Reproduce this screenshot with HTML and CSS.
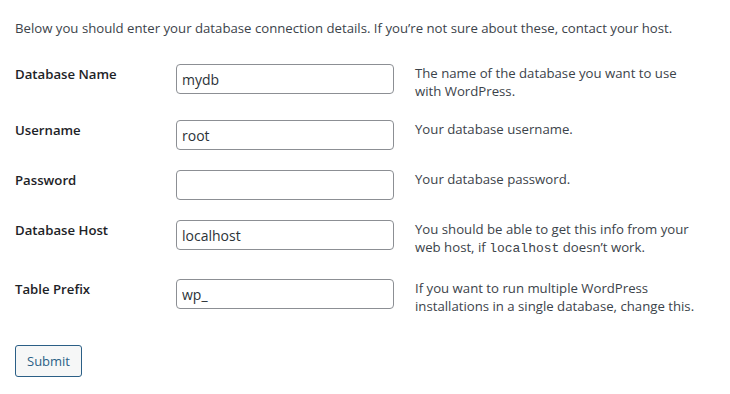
FILE: index.html
```html
<!DOCTYPE html>
<html lang="en">
  <head>
    <meta charset="UTF-8">
    <title>WordPress &rsaquo; Setup Configuration File</title>
    <link rel="stylesheet" href="styles.css">
  </head>
  <body>
    <form class="setup" method="post" action="setup-config.php?step=2">
      <p class="intro">Below you should enter your database connection details. If you&#8217;re not sure about these, contact your host.</p>

      <div class="form-table">
        <div class="row">
          <label for="dbname">Database Name</label>
          <input id="dbname" name="dbname" type="text" value="mydb">
          <p class="desc">The name of the database you want to use with WordPress.</p>
        </div>
        <div class="row">
          <label for="uname">Username</label>
          <input id="uname" name="uname" type="text" value="root">
          <p class="desc">Your database username.</p>
        </div>
        <div class="row">
          <label for="pwd">Password</label>
          <input id="pwd" name="pwd" type="text" value="">
          <p class="desc">Your database password.</p>
        </div>
        <div class="row">
          <label for="dbhost">Database Host</label>
          <input id="dbhost" name="dbhost" type="text" value="localhost">
          <p class="desc">You should be able to get this info from your web host, if <code>localhost</code> doesn&#8217;t work.</p>
        </div>
        <div class="row">
          <label for="prefix">Table Prefix</label>
          <input id="prefix" name="prefix" type="text" value="wp_">
          <p class="desc">If you want to run multiple WordPress installations in a single database, change this.</p>
        </div>
      </div>

      <p class="step">
        <button type="submit" class="button">Submit</button>
      </p>
    </form>
  </body>
</html>
```

FILE: styles.css
```css
:root {
  --text-color: #3c434a;
  --input-text: #2c3338;
  --input-border: #8c8f94;
  --button-color: #2b5f86;
  --button-bg: #f6f7f7;
}

* {
  margin: 0;
  padding: 0;
  box-sizing: border-box;
}

body {
  font-family: 'Open Sans', sans-serif;
  font-size: 13.2px;
  line-height: 18px;
  color: var(--text-color);
  background: #fff;
}

.setup {
  padding: 19px 15px 0;
}

.intro {
  margin-bottom: 27px;
}

.row {
  display: grid;
  grid-template-columns: 140px 218px 1fr;
  column-gap: 21px;
  align-items: start;
  padding-bottom: 20px;
  min-height: 50px;
}

.row label {
  font-weight: 600;
  padding-top: 1px;
  color: #1d2327;
}

.row input {
  height: 30px;
  width: 218px;
  padding: 0 5px;
  font-family: 'Open Sans', sans-serif;
  font-size: 14px;
  color: var(--input-text);
  border: 1px solid var(--input-border);
  border-radius: 4px;
  background: #fff;
}

.desc {
  max-width: 282px;
}

code {
  font-family: 'Liberation Mono', monospace;
  font-size: 13px;
  line-height: 21px;
}

.step {
  padding-top: 10px;
}

.button {
  height: 32px;
  padding: 0 11px;
  font-family: 'Open Sans', sans-serif;
  font-size: 13px;
  color: var(--button-color);
  background: var(--button-bg);
  border: 1px solid var(--button-color);
  border-radius: 3px;
  cursor: pointer;
}
```
